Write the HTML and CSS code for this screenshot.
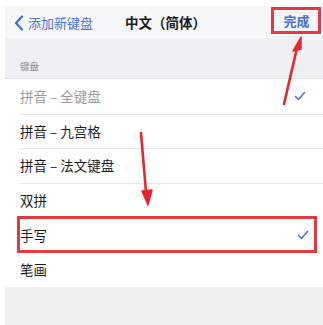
FILE: index.html
```html
<!DOCTYPE html>
<html lang="zh">
<head>
<meta charset="utf-8">
<link rel="stylesheet" href="styles.css">
</head>
<body>
<div class="screen">
  <div class="nav">
    <div class="back">
      <svg class="chev" width="10" height="16" viewBox="0 0 10 16"><path d="M8 1.5 L2 8 L8 14.5" fill="none" stroke="#3b6fd6" stroke-width="2.2" stroke-linecap="round" stroke-linejoin="round"/></svg>
      <span>添加新键盘</span>
    </div>
    <div class="title">中文（简体）</div>
    <div class="done">完成</div>
  </div>
  <div class="section-head">键盘</div>
  <ul class="list">
    <li class="row disabled"><span>拼音 – 全键盘</span><svg class="check" width="12" height="10" viewBox="0 0 12 10"><path d="M1.5 5.5 L4.5 8.5 L10.5 1.5" fill="none" stroke="#4a72d4" stroke-width="1.6" stroke-linecap="round" stroke-linejoin="round"/></svg></li>
    <li class="row"><span>拼音 – 九宫格</span></li>
    <li class="row"><span>拼音 – 法文键盘</span></li>
    <li class="row"><span>双拼</span></li>
    <li class="row selected"><span>手写</span><svg class="check" width="12" height="10" viewBox="0 0 12 10"><path d="M1.5 5.5 L4.5 8.5 L10.5 1.5" fill="none" stroke="#4a72d4" stroke-width="1.6" stroke-linecap="round" stroke-linejoin="round"/></svg></li>
    <li class="row"><span>笔画</span></li>
  </ul>
  <div class="footer"></div>
</div>
<svg class="arrows" width="323" height="325" viewBox="0 0 323 325">
  <path d="M284 104 L297 48" stroke="#e8262b" stroke-width="2.6" stroke-linecap="round"/>
  <path d="M301 37 L293 51 L301 49 Z" fill="#e8262b" stroke="#e8262b" stroke-width="1.5" stroke-linejoin="round"/>
  <path d="M141 133 L146 192" stroke="#e8262b" stroke-width="2.6" stroke-linecap="round"/>
  <path d="M148 205 L142 191 L152 190 Z" fill="#e8262b" stroke="#e8262b" stroke-width="1.5" stroke-linejoin="round"/>
</svg>
</body>
</html>
```
FILE: styles.css
```css
* { box-sizing: border-box; }
html, body { margin: 0; padding: 0; }
body {
  width: 323px;
  height: 325px;
  overflow: hidden;
  background: #ffffff;
  font-family: "Noto Sans CJK SC", "Noto Sans", sans-serif;
  position: relative;
}
.screen {
  margin: 6px 0 0 5px;
  background: #efeff4;
  height: 319px;
  display: flex;
  flex-direction: column;
}
.nav {
  height: 32px;
  display: flex;
  align-items: center;
  position: relative;
  background: #f6f6f8;
  padding-left: 9px;
}
.back {
  display: flex;
  align-items: center;
  gap: 4px;
  color: #4a74d6;
  font-size: 13px;
}
.chev { margin-top: 1px; }
.title {
  position: absolute;
  left: 120px;
  top: 0;
  height: 32px;
  line-height: 32px;
  font-size: 13.5px;
  font-weight: 700;
  color: #1a1a1a;
}
.done {
  position: absolute;
  left: 266px;
  top: 1px;
  width: 50px;
  height: 27px;
  border: 3px solid #e5393e;
  color: #3f6fd3;
  font-size: 13px;
  font-weight: 700;
  display: flex;
  align-items: center;
  justify-content: center;
  padding-left: 1px;
}
.section-head {
  height: 41px;
  display: flex;
  align-items: flex-end;
  padding: 0 0 5px 15px;
  font-size: 9.5px;
  color: #8a8a8e;
  border-bottom: 1px solid #e2e2e6;
}
.list {
  list-style: none;
  margin: 0;
  padding: 0;
  background: #ffffff;
}
.row {
  height: 34.5px;
  display: flex;
  align-items: center;
  justify-content: space-between;
  padding: 0 17px 0 15px;
  font-size: 13.5px;
  color: #1c1c1e;
  position: relative;
}
.row + .row::before {
  content: "";
  position: absolute;
  left: 15px;
  right: 0;
  top: 0;
  border-top: 1px solid #e6e6ea;
}
.row.disabled { color: #9a9aa0; }
.row.selected {
  margin-left: 12px;
  width: 300px;
  padding-left: 0;
  padding-right: 5px;
  border: 3px solid #e5393e;
  height: 37px;
  margin-top: -1px;
  margin-bottom: -1px;
}
.row.selected::before { display: none; }
.row.selected + .row::before { display: none; }
.footer {
  flex: 1;
  background: #efefef;
}
.arrows {
  position: absolute;
  left: 0;
  top: 0;
  pointer-events: none;
}
```
